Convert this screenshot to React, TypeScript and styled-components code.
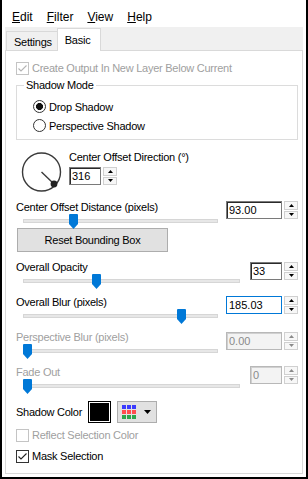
import React from "react";
import styled, { createGlobalStyle } from "styled-components";

// ------------ global page styles ------------
const GlobalStyle = createGlobalStyle`
  html, body {
    margin: 0;
    padding: 0;
    background: #fff;
  }
  body {
    font-family: "Liberation Sans", Arial, sans-serif;
    font-size: 11px;
    letter-spacing: -0.25px;
    color: #000;
  }
  * {
    box-sizing: border-box;
  }
`;

const DISABLED = "#a0a0a0";

type SliderSpec = {
  label: string;
  value: string;
  pos: number; // thumb offset along the rail, px
  wide: boolean;
  mt: number;
  spinMt: number;
  focus?: boolean;
  disabled?: boolean;
};

const sliders: SliderSpec[] = [
  { label: "Overall Opacity", value: "33", pos: 69, wide: false, mt: 8, spinMt: 2 },
  { label: "Overall Blur (pixels)", value: "185.03", pos: 154, wide: true, mt: 7, spinMt: 1, focus: true },
  { label: "Perspective Blur (pixels)", value: "0.00", pos: 0, wide: true, mt: 7, spinMt: 2, disabled: true },
  { label: "Fade Out", value: "0", pos: 0, wide: false, mt: 7, spinMt: 1, disabled: true },
];

function CheckMark({ color }: { color: string }) {
  return (
    <svg width="11" height="11" viewBox="0 0 11 11">
      <path d="M1.5 5.5 L4 8 L9.5 2.5" fill="none" stroke={color} strokeWidth="1.1" />
    </svg>
  );
}

function Spin({
  value,
  wide,
  mt,
  focus,
  disabled,
}: {
  value: string;
  wide: boolean;
  mt: number;
  focus?: boolean;
  disabled?: boolean;
}) {
  const arrow = disabled ? "#8a8a8a" : "#000";
  return (
    <SpinWrap $mt={mt}>
      <Field $w={wide ? 56 : 32} $focus={focus} $disabled={disabled}>
        {value}
      </Field>
      <Spinner>
        <SpinBtn>
          <svg width="5" height="3" viewBox="0 0 5 3">
            <path d="M0 3 L2.5 0 L5 3 Z" fill={arrow} />
          </svg>
        </SpinBtn>
        <SpinBtn>
          <svg width="5" height="3" viewBox="0 0 5 3">
            <path d="M0 0 L2.5 3 L5 0 Z" fill={arrow} />
          </svg>
        </SpinBtn>
      </Spinner>
    </SpinWrap>
  );
}

function Slider({ spec }: { spec: SliderSpec }) {
  return (
    <SliderBlock $mt={spec.mt}>
      <Label $disabled={spec.disabled}>{spec.label}</Label>
      <TrackArea $mr={spec.wide ? 8 : 10}>
        <Rail />
        <Thumb $left={spec.pos} width="9" height="15" viewBox="0 0 9 15">
          <path d="M0 1 Q0 0 1 0 H8 Q9 0 9 1 V10 L4.5 15 L0 10 Z" fill="#0078d7" />
        </Thumb>
      </TrackArea>
      <SpinCell>
        <Spin
          value={spec.value}
          wide={spec.wide}
          mt={spec.spinMt}
          focus={spec.focus}
          disabled={spec.disabled}
        />
      </SpinCell>
    </SliderBlock>
  );
}

export default function App() {
  return (
    <>
      <GlobalStyle />
      <Window>
        {/* ------ menu bar ------ */}
        <MenuBar>
          <MenuItem>
            <Key>E</Key>dit
          </MenuItem>
          <MenuItem>
            <Key>F</Key>ilter
          </MenuItem>
          <MenuItem>
            <Key>V</Key>iew
          </MenuItem>
          <MenuItem>
            <Key>H</Key>elp
          </MenuItem>
        </MenuBar>

        {/* ------ tabs ------ */}
        <TabStrip>
          <Tab>Settings</Tab>
          <Tab $active>Basic</Tab>
        </TabStrip>

        <Panel>
          <CheckRow $mt={11} $disabled>
            <Box $disabled>
              <CheckMark color="#b4b4b4" />
            </Box>
            Create Output In New Layer Below Current
          </CheckRow>

          {/* ------ shadow mode group ------ */}
          <Group>
            <Legend>Shadow Mode</Legend>
            <RadioRow>
              <Radio $checked />
              Drop Shadow
            </RadioRow>
            <RadioRow>
              <Radio />
              Perspective Shadow
            </RadioRow>
          </Group>

          {/* ------ direction dial ------ */}
          <DialRow>
            <Dial width="44" height="44" viewBox="0 0 44 44">
              <circle cx="21.5" cy="22" r="19" fill="none" stroke="#3a3a3a" strokeWidth="1.4" />
              <line x1="21.5" y1="22" x2="34" y2="34" stroke="#3a3a3a" strokeWidth="1.4" />
              <circle cx="34" cy="34" r="3.4" fill="#222" />
            </Dial>
            <DialCol>
              <Label>Center Offset Direction (°)</Label>
              <Spin value="316" wide={false} mt={3} />
            </DialCol>
          </DialRow>

          <Slider
            spec={{
              label: "Center Offset Distance (pixels)",
              value: "93.00",
              pos: 46,
              wide: true,
              mt: 6,
              spinMt: 1,
            }}
          />

          <ResetButton>Reset Bounding Box</ResetButton>

          {sliders.map((s) => (
            <Slider key={s.label} spec={s} />
          ))}

          {/* ------ shadow colour ------ */}
          <ColorRow>
            Shadow Color
            <Swatch />
            <PickerButton>
              <svg width="14" height="14" viewBox="0 0 14 14">
                {["#3a3aff", "#ff4d4d", "#2ca64c"].map((c, r) =>
                  [0, 1, 2].map((col) => (
                    <rect key={`${r}-${col}`} x={col * 5} y={r * 5} width="4" height="4" fill={c} />
                  ))
                )}
              </svg>
              <svg width="7" height="4" viewBox="0 0 7 4">
                <path d="M0 0 L3.5 4 L7 0 Z" fill="#000" />
              </svg>
            </PickerButton>
          </ColorRow>

          <CheckRow $mt={6} $disabled>
            <Box $disabled />
            Reflect Selection Color
          </CheckRow>
          <CheckRow $mt={8}>
            <Box>
              <CheckMark color="#222" />
            </Box>
            Mask Selection
          </CheckRow>
        </Panel>
      </Window>
    </>
  );
}

// ------- component styles -------
const Window = styled.div`
  width: 308px;
  height: 479px;
  background: #fff;
  border: 2px solid #000;
  border-top: none;
  display: flex;
  flex-direction: column;
`;

const MenuBar = styled.div`
  display: flex;
  height: 27px;
  padding: 10px 0 0 3px;
  font-size: 12px;
  line-height: 15px;
  letter-spacing: 0;
`;

const MenuItem = styled.span`
  padding: 0 7px;
`;

const Key = styled.span`
  text-decoration: underline;
  text-underline-offset: 1px;
`;

const TabStrip = styled.div`
  display: flex;
  align-items: flex-end;
  height: 23px;
  margin: 0 3px;
  padding-left: 1px;
  background: #f0f0f0;
`;

const Tab = styled.div<{ $active?: boolean }>`
  position: relative;
  z-index: ${(p) => (p.$active ? 2 : 1)};
  height: ${(p) => (p.$active ? 23 : 19)}px;
  margin: 0 0 ${(p) => (p.$active ? -1 : 0)}px ${(p) => (p.$active ? -2 : 0)}px;
  padding: ${(p) => (p.$active ? "5px 10px 0 7px" : "4px 6px 0 7px")};
  line-height: 13px;
  border: 1px solid #d9d9d9;
  border-bottom: none;
  background: ${(p) => (p.$active ? "#fff" : "#f0f0f0")};
`;

const Panel = styled.div`
  flex: 1;
  margin: 0 3px 3px;
  padding: 0 4px 0 10px;
  border: 1px solid #d9d9d9;
  background: #fff;
  display: flex;
  flex-direction: column;
`;

const CheckRow = styled.div<{ $mt: number; $disabled?: boolean }>`
  display: flex;
  align-items: center;
  gap: 3px;
  height: 13px;
  line-height: 13px;
  margin-top: ${(p) => p.$mt}px;
  color: ${(p) => (p.$disabled ? DISABLED : "#000")};
`;

const Box = styled.span<{ $disabled?: boolean }>`
  width: 13px;
  height: 13px;
  flex: none;
  display: grid;
  place-items: center;
  border: 1px solid ${(p) => (p.$disabled ? "#c4c4c4" : "#333")};
  background: #fff;
`;

const Group = styled.fieldset`
  margin: 3px 0 0;
  padding: 5px 0 4px;
  min-width: 0;
  border: 1px solid #dcdcdc;
`;

const Legend = styled.legend`
  margin-left: 7px;
  padding: 0 2px;
  line-height: 14px;
`;

const RadioRow = styled.div`
  display: flex;
  align-items: center;
  gap: 3px;
  height: 19px;
  padding-left: 16px;
`;

const Radio = styled.span<{ $checked?: boolean }>`
  width: 13px;
  height: 13px;
  border-radius: 50%;
  border: 1px solid #333;
  background: ${(p) =>
    p.$checked ? "radial-gradient(circle, #111 0 3.2px, #fff 3.8px)" : "#fff"};
`;

const DialRow = styled.div`
  display: flex;
  gap: 5px;
  margin-top: 10px;
`;

const Dial = styled.svg`
  margin-left: 4px;
  flex: none;
`;

const DialCol = styled.div`
  display: flex;
  flex-direction: column;
  align-items: flex-start;
`;

const Label = styled.div<{ $disabled?: boolean }>`
  line-height: 14px;
  color: ${(p) => (p.$disabled ? DISABLED : "#000")};
`;

const SliderBlock = styled.div<{ $mt: number }>`
  display: grid;
  grid-template-columns: 1fr auto;
  margin-top: ${(p) => p.$mt}px;
`;

const TrackArea = styled.div<{ $mr: number }>`
  position: relative;
  grid-column: 1;
  height: 14px;
  margin: 0 ${(p) => p.$mr}px 0 7px;
`;

const Rail = styled.div`
  height: 4px;
  margin-top: 5px;
  background: #e7e7e7;
  border: 1px solid #d6d6d6;
`;

const Thumb = styled.svg<{ $left: number }>`
  position: absolute;
  top: 0;
  left: ${(p) => p.$left}px;
`;

const SpinCell = styled.div`
  grid-column: 2;
  grid-row: 1 / span 2;
`;

const SpinWrap = styled.div<{ $mt: number }>`
  display: flex;
  gap: 2px;
  margin-top: ${(p) => p.$mt}px;
`;

const Field = styled.div<{ $w: number; $focus?: boolean; $disabled?: boolean }>`
  width: ${(p) => p.$w}px;
  height: 18px;
  padding-left: 2px;
  line-height: 16px;
  letter-spacing: 0;
  border: 1px solid ${(p) => (p.$focus ? "#0078d7" : p.$disabled ? "#b8b8b8" : "#7a7a7a")};
  box-shadow: ${(p) =>
    p.$focus ? "none" : `inset 1px 1px 0 ${p.$disabled ? "#d0d0d0" : "#2a2a2a"}`};
  background: ${(p) => (p.$disabled ? "#f3f3f3" : "#fff")};
  color: ${(p) => (p.$disabled ? "#8a8a8a" : "#000")};
`;

const Spinner = styled.div`
  display: flex;
  flex-direction: column;
  gap: 1px;
  width: 14px;
  height: 18px;
`;

const SpinBtn = styled.div`
  flex: 1;
  display: grid;
  place-items: center;
  border: 1px solid #d0d0d0;
  background: #f7f7f7;
`;

const ResetButton = styled.button`
  width: 151px;
  height: 24px;
  margin-left: 1px;
  padding: 0;
  font: inherit;
  letter-spacing: inherit;
  color: #000;
  background: #e1e1e1;
  border: 1px solid #adadad;
`;

const ColorRow = styled.div`
  display: flex;
  align-items: center;
  gap: 6px;
  height: 22px;
  margin-top: 8px;
`;

const Swatch = styled.span`
  width: 23px;
  height: 22px;
  background: #000;
  border: 1px solid #000;
  box-shadow: inset 0 0 0 1px #fff;
`;

const PickerButton = styled.span`
  width: 40px;
  height: 22px;
  display: flex;
  align-items: center;
  gap: 8px;
  padding-left: 4px;
  background: #e1e1e1;
  border: 1px solid #adadad;
`;
